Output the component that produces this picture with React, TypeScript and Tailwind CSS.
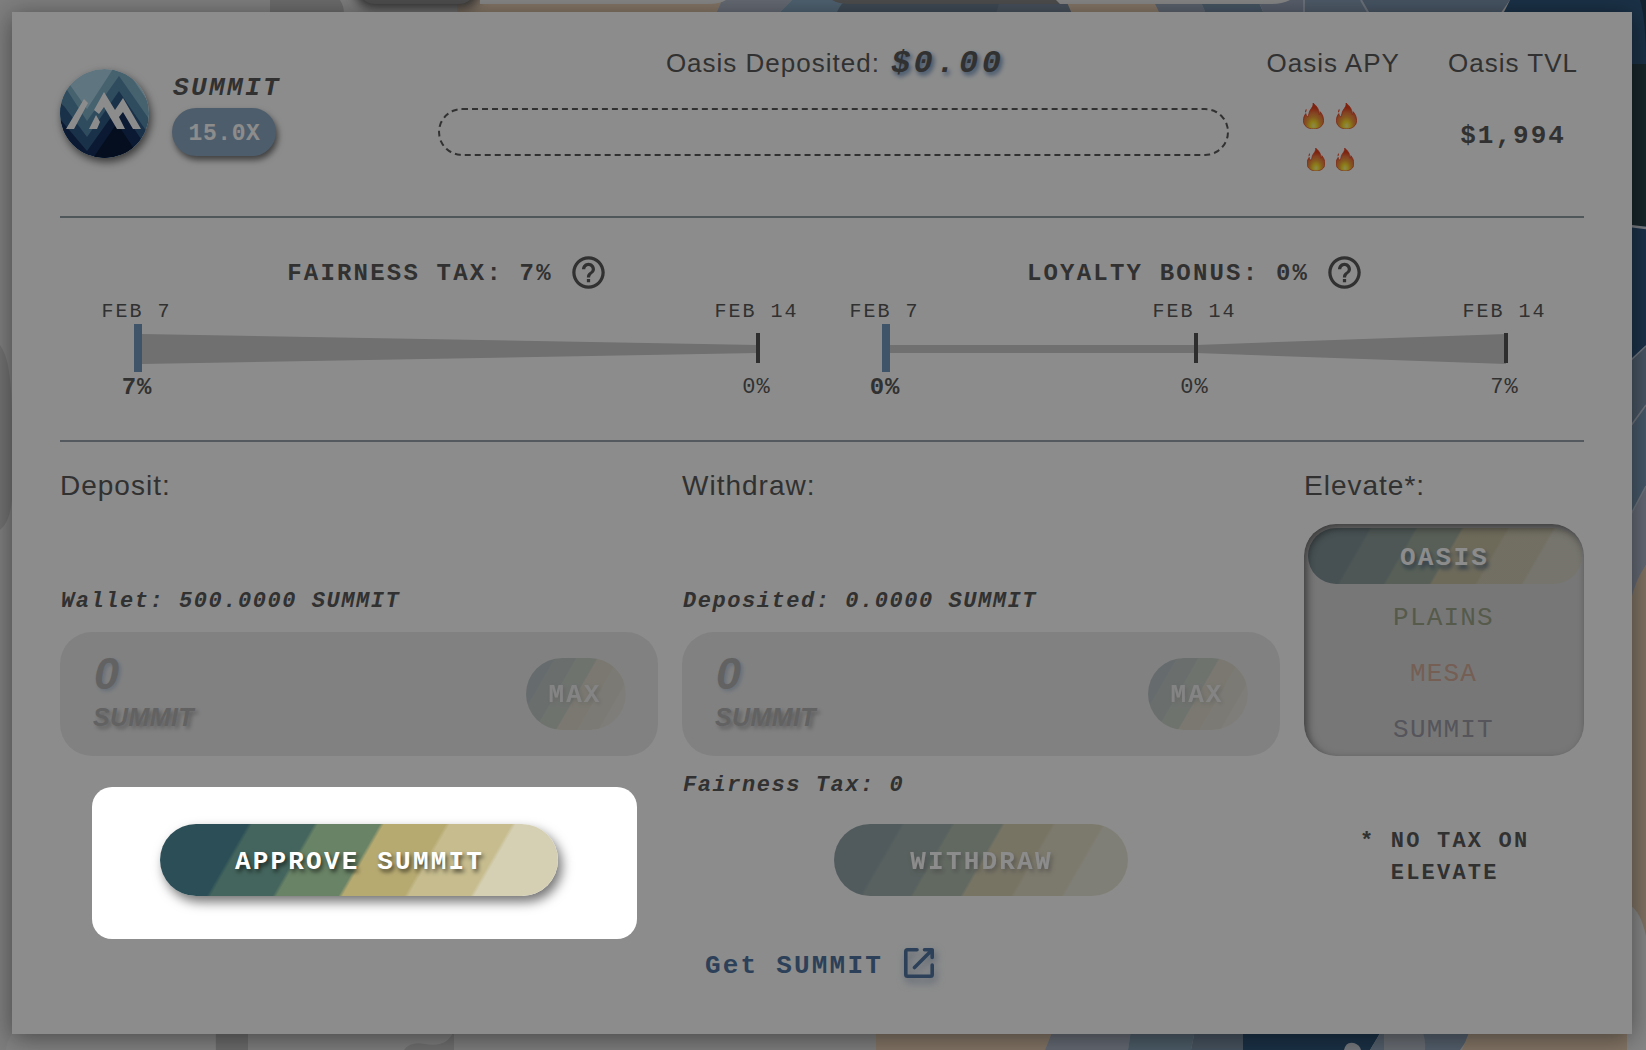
import React from "react";

const mono = "font-['Liberation_Mono',monospace]";
const sans = "font-['Liberation_Sans',sans-serif]";
const oasis =
  "bg-[linear-gradient(120deg,#2b4e57_20%,#44655d_21%,#44655d_35%,#698366_36%,#698366_50%,#b7aa71_51%,#b7aa71_65%,#c6bc8e_66%,#c6bc8e_80%,#d5d0b4_81%)]";

function Backdrop() {
  return (
    <svg className="absolute inset-0" width="1646" height="1050" viewBox="0 0 1646 1050" aria-hidden="true">
      <defs>
        <filter id="soft" x="-20%" y="-50%" width="140%" height="200%">
          <feGaussianBlur stdDeviation="6" />
        </filter>
      </defs>
      <rect width="1646" height="1050" fill="#e6e6e6" />
      <path d="M270 0H340Q344 6 344 14H270Z" fill="#c4c4c4" />
      <path d="M457 0H722L716 14H457Z" fill="#efd5b9" />
      <rect x="355" y="-30" width="125" height="38" rx="18" fill="#555" filter="url(#soft)" />
      <path d="M722 0H792L778 14H716Z" fill="#b7bfd0" />
      <path d="M792 0H850L838 14H778Z" fill="#8fb0cb" />
      <path d="M836 14Q842 0 850 0H1000V14Z" fill="#71879b" />
      <path d="M1000 0H1072V14H996Z" fill="#8091a6" />
      <path d="M1066 0H1153L1160 14H1072Z" fill="#efd5b9" />
      <path d="M1153 0H1200L1206 14H1160Z" fill="#a4b0c4" />
      <path d="M1200 0H1258L1264 14H1206Z" fill="#7f9ab4" />
      <path d="M1258 0H1304V14H1264Z" fill="#a0adc4" />
      <path d="M1304 0H1361L1369 14H1304Z" fill="#8ea4bd" />
      <path d="M1361 0H1510L1500 14H1369Z" fill="#8199b3" />
      <path d="M1361 0L1369 14M1304 0V14" stroke="#c4cfdf" strokeWidth="2" />
      <rect x="358" y="-30" width="118" height="34" rx="17" fill="#8c8c8c" />
      <path d="M480 0H726Q720 4 708 4H480Z" fill="#f4f4f4" />
      <path d="M832 0H1060V4H850Q838 4 832 0Z" fill="#8c8c8c" />
      <path d="M1056 0H1290Q1282 4 1272 4H1060Z" fill="#f4f4f4" />

      <path d="M1510 0H1646V64H1620V20H1500Z" fill="#315a80" />
      <path d="M1640 0Q1646 20 1646 64V0Z" fill="#243f58" />
      <rect x="1620" y="64" width="26" height="163" fill="#2b454b" />
      <rect x="1620" y="226" width="26" height="140" fill="#315a84" />
      <path d="M1630 226L1646 228" stroke="#dde4ee" strokeWidth="2.5" />
      <path d="M1630 360L1646 345V406L1630 428Z" fill="#8299b3" />
      <path d="M1630 428L1646 406V486L1630 517Z" fill="#809fbd" />
      <path d="M1630 517L1646 486V565L1630 603Z" fill="#b3bdd1" />
      <path d="M1630 361L1646 346M1630 427L1646 405M1630 516L1646 486" stroke="#c9d3e2" strokeWidth="1.5" />
      <path d="M1630 603Q1636 578 1646 565V940L1630 906Z" fill="#e8cfb5" />
      <path d="M1630 906Q1640 910 1646 936V1050H1627V1020Z" fill="#f2f2f2" />

      <path d="M0 345Q12 360 12 420V500Q10 522 0 530Z" fill="#cfcfcf" />
      <path d="M6 1050Q8 1030 30 1020H215V1050Z" fill="#ededed" />
      <path d="M216 1030H248V1050H216Z" fill="#c4c4c4" />
      <path d="M404 1050Q410 1041 425 1044Q448 1048 454 1030V1050Z" fill="#cccccc" />
      <path d="M876 1030H1053L1045 1050H876Z" fill="#efd5b9" />
      <path d="M1053 1030H1131L1128 1050H1045Z" fill="#b7bfd0" />
      <path d="M1131 1030H1195L1191 1050H1128Z" fill="#8ba7bd" />
      <path d="M1195 1030H1243V1050H1191Z" fill="#8097ae" />
      <path d="M1243 1030H1382L1370 1050H1243Z" fill="#315a80" />
      <path d="M1382 1030H1474L1460 1050H1370Z" fill="#99aec6" />
      <path d="M1384 1030H1422Q1426 1040 1425 1050H1384Z" fill="#c0c8d4" />
      <path d="M1344 1050Q1346 1041 1354 1043Q1360 1045 1361 1050Z" fill="#d8dde6" />
      <path d="M1470 1030H1627V1050H1462Z" fill="#efd5b9" />
    </svg>
  );
}

function Logo() {
  return (
    <svg
      viewBox="0 0 89 89"
      className="mt-[57px] size-[89px] shrink-0 rounded-full shadow-[2px_4px_8px_rgba(0,0,0,0.6)]"
    >
      <defs>
        <clipPath id="disc">
          <circle cx="44.5" cy="44.5" r="44.5" />
        </clipPath>
      </defs>
      <g clipPath="url(#disc)">
        <rect width="89" height="89" fill="#aed5e7" />
        <path d="M0 28L10 16L27 40L53 0L66 0L89 34V89H0Z" fill="#7fb2c9" />
        <path d="M0 10L27 52L59 7L89 50V89H0Z" fill="#5789ac" />
        <path d="M0 34L4 37L27 68L59 22L89 66V89H0Z" fill="#315b85" />
        <path d="M0 50L27 82L59 37L89 82V89H0Z" fill="#142f5d" />
        <path d="M33 89L57 54L80 89Z" fill="#091b3a" />
        <path
          d="M6 60L24 30L28 34L14 60ZM34 41L44 23L55 41L63 29L81 60H73L63 43L59 48L65 60H57L44 38L39 45ZM36 46L40 53L37 60H29Z"
          fill="#fff"
        />
      </g>
    </svg>
  );
}

function Flame({ className }: { className: string }) {
  return (
    <svg viewBox="0 0 21 27" className={className} aria-hidden="true">
      <defs>
        <radialGradient id="fl" cx="50%" cy="88%" r="82%">
          <stop offset="0" stopColor="#fffb9a" />
          <stop offset="0.2" stopColor="#ffe62e" />
          <stop offset="0.42" stopColor="#f2a23a" />
          <stop offset="0.62" stopColor="#ee7a40" />
          <stop offset="0.85" stopColor="#e8401c" />
        </radialGradient>
      </defs>
      <path
        d="M10 0C15 4 16.500 8 16.500 12C17.300 11 17.600 10 17.400 9C20 12 21 15 21 18.500C21 23.500 16.500 27 10.500 27C4.500 27 0 23.500 0 18.500C0 15 1 13 2.500 11C3 13 3.500 14 4.500 14.500C6 12 5.500 10 7 7.500C9 4.500 10.500 3 10 0Z"
        fill="url(#fl)"
        stroke="#e03414"
        strokeWidth="0.700"
      />
      <path d="M3 6C2 7.500 1.500 9 2 10C3.500 9 3.500 7.500 3 6Z" fill="#e8401c" />
    </svg>
  );
}

function HelpIcon() {
  return (
    <svg viewBox="0 0 24 24" className="size-[39px]" fill="currentColor" aria-hidden="true">
      <path d="M11 18h2v-2h-2v2zm1-16C6.480 2 2 6.480 2 12s4.480 10 10 10 10-4.480 10-10S17.520 2 12 2zm0 18c-4.410 0-8-3.590-8-8s3.590-8 8-8 8 3.590 8 8-3.590 8-8 8zm0-14c-2.210 0-4 1.790-4 4h2c0-1.100.9-2 2-2s2 .9 2 2c0 2-3 1.750-3 5h2c0-2.250 3-2.500 3-5 0-2.210-1.790-4-4-4z" />
    </svg>
  );
}

type Stop = { x: number; date: string; pct: string; active?: boolean };

function Timeline({ title, shape, stops }: { title: string; shape: string; stops: Stop[] }) {
  return (
    <div className="w-[748px] pt-[35px]">
      <div className="flex h-[39px] items-center justify-center gap-[16px] pr-[1px]">
        <span className="pt-[3px] text-[24px] font-bold leading-8 tracking-[2.200px]">{title}</span>
        <HelpIcon />
      </div>
      <div className="relative mt-[4px] h-[108px]">
        <svg width="748" height="48" viewBox="0 0 748 48" className="absolute top-[28px] left-0">
          <path d={shape} fill="#cccccc" />
        </svg>
        {stops.map((s, i) => (
          <div
            key={i}
            className="absolute top-0 flex w-[120px] -translate-x-1/2 flex-col items-center"
            style={{ left: s.x }}
          >
            <span className="-ml-[3px] h-[28px] whitespace-pre text-[20px] leading-[32px] tracking-[2px]">{s.date}</span>
            <span className="flex h-[48px] items-center">
              <span className={s.active ? "h-[48px] w-[8px] bg-[#7399be]" : "h-[30px] w-[4px] bg-[#555]"} />
            </span>
            <span
              className={
                s.active
                  ? "-ml-[2px] text-[24px] font-bold leading-[32px] tracking-[0.800px]"
                  : "-ml-[3px] text-[22px] leading-[32px] tracking-[1px]"
              }
            >
              {s.pct}
            </span>
          </div>
        ))}
      </div>
    </div>
  );
}

function AmountBox() {
  return (
    <div className="mt-[14px] flex h-[124px] items-center justify-between rounded-[32px] bg-[#ececec] pr-[32px] pl-[33px]">
      <div className={`${sans} flex flex-col font-bold italic text-[#b2b2b2]`}>
        <span className="h-[40px] pl-px text-[45px] leading-[38px] [text-shadow:2px_2px_4px_#b9c8d8]">0</span>
        <span className="mt-[6px] text-[25px] leading-[32px] tracking-[0.400px] [text-shadow:3px_3px_4px_#aaa]">SUMMIT</span>
      </div>
      <div className={`flex h-[72px] w-[100px] items-center justify-center rounded-full opacity-25 ${oasis}`}>
        <span className="-ml-[2px] pt-[3px] text-[26px] font-bold tracking-[2px] text-white [text-shadow:2px_2px_4px_rgba(0,0,0,0.6)]">
          MAX
        </span>
      </div>
    </div>
  );
}

const pillText = "pt-[4px] pl-px text-[26px] font-bold tracking-[2.200px] text-white [text-shadow:2px_3px_4px_rgba(0,0,0,0.6)]";
const heading = `${sans} h-[40px] text-[28px] leading-[40px] tracking-[1px]`;
const note = "text-[22px] font-bold italic leading-8 tracking-[1.550px] pl-px";

export default function App() {
  return (
    <div className={`relative h-[1050px] w-[1646px] overflow-hidden p-3 text-[#5a5a5a] ${mono}`}>
      <Backdrop />
      <main className="relative flex h-[1022px] w-[1620px] flex-col bg-white px-12 shadow-[0_4px_24px_rgba(0,0,0,0.45)]">
        <header className="flex h-[204px] items-start">
          <Logo />
          <div className="mt-[60px] ml-[23px] w-[104px]">
            <div className="ml-px text-[26px] font-bold italic leading-8 tracking-[2.400px]">SUMMIT</div>
            <div className="mt-[4px] flex h-[48px] items-center justify-center rounded-full bg-[#8ea9c4] pt-[4px] pl-px text-[23px] font-bold tracking-[0.600px] text-white shadow-[2px_4px_6px_rgba(0,0,0,0.55)]">
              15.0X
            </div>
          </div>
          <div className="mt-[31px] ml-[162px] w-[792px]">
            <div className="flex h-[40px] items-baseline justify-center pl-[3px] leading-[40px]">
              <span className={`${sans} text-[26px] tracking-[1px]`}>Oasis Deposited:</span>
              <span className="ml-[11px] text-[32px] font-bold italic leading-[40px] tracking-[3.500px] [text-shadow:2px_3px_5px_#5f86b4]">
                $0.00
              </span>
            </div>
            <div className="mt-[25px] h-[48px] rounded-full border-2 border-dashed border-[#5a5a5a]" />
          </div>
          <div className="mt-[31px] ml-[14px] flex w-[180px] flex-col items-center">
            <div className={`${sans} h-[40px] text-[26px] leading-[40px] tracking-[1px]`}>Oasis APY</div>
            <div className="mt-[20px] mr-[7px] flex gap-[12px]">
              <Flame className="h-[26px] w-[21px]" />
              <Flame className="h-[26px] w-[21px]" />
            </div>
            <div className="mt-[19px] mr-[6px] flex gap-[11px]">
              <Flame className="h-[23px] w-[18px]" />
              <Flame className="h-[23px] w-[18px]" />
            </div>
          </div>
          <div className="mt-[31px] ml-[19px] flex w-[142px] flex-col items-center">
            <div className={`${sans} h-[40px] text-[26px] leading-[40px] tracking-[1px]`}>Oasis TVL</div>
            <div className="mt-[37px] text-[26px] font-bold leading-8 tracking-[2px]">$1,994</div>
          </div>
        </header>
        <div className="h-[2px] bg-[#929fa7]" />
        <section className="flex h-[222px] justify-center">
          <Timeline
            title="FAIRNESS TAX: 7%"
            shape="M68 10L684 21V29L68 40Z"
            stops={[
              { x: 64, date: "FEB 7", pct: "7%", active: true },
              { x: 684, date: "FEB 14", pct: "0%" },
            ]}
          />
          <Timeline
            title="LOYALTY BONUS: 0%"
            shape="M68 21H374L684 10V40L374 29H68Z"
            stops={[
              { x: 64, date: "FEB 7", pct: "0%", active: true },
              { x: 374, date: "FEB 14", pct: "0%" },
              { x: 684, date: "FEB 14", pct: "7%" },
            ]}
          />
        </section>
        <div className="h-[2px] bg-[#99a0ad]" />
        <section className="flex h-[454px] gap-6 pt-6">
          <div className="w-[598px]">
            <div className={heading}>Deposit:</div>
            <div className={`mt-[80px] ${note}`}>Wallet: 500.0000 SUMMIT</div>
            <AmountBox />
            <div
              className={`mt-[68px] ml-[100px] flex h-[72px] w-[398px] items-center justify-center rounded-full shadow-[4px_6px_12px_rgba(0,0,0,0.55)] ${oasis}`}
            >
              <span className={pillText}>APPROVE SUMMIT</span>
            </div>
          </div>
          <div className="w-[598px]">
            <div className={heading}>Withdraw:</div>
            <div className={`mt-[80px] ${note}`}>Deposited: 0.0000 SUMMIT</div>
            <AmountBox />
            <div className={`mt-[14px] ${note}`}>Fairness Tax: 0</div>
            <div
              className={`mt-[22px] ml-[152px] flex h-[72px] w-[294px] items-center justify-center rounded-full opacity-50 ${oasis}`}
            >
              <span className={pillText}>WITHDRAW</span>
            </div>
          </div>
          <div className="w-[280px]">
            <div className={heading}>Elevate*:</div>
            <div className="relative mt-[18px] flex h-[232px] flex-col overflow-hidden rounded-[32px] bg-[#d9d9d9] pt-1 pr-px text-center text-[26px] leading-[68px] tracking-[1.200px]">
              <div className={`absolute top-1 right-[2px] left-1 h-[56px] rounded-full opacity-50 ${oasis}`} />
              <div className="relative h-[56px] pl-[2px] font-bold leading-[60px] tracking-[2.200px] text-white [text-shadow:2px_4px_4px_#5c7287]">OASIS</div>
              <div className="h-[56px] text-[#9ba588]">PLAINS</div>
              <div className="h-[56px] text-[#d6ab98]">MESA</div>
              <div className="h-[56px] text-[#9b9ba7]">SUMMIT</div>
              <div className="absolute inset-0 rounded-[32px] shadow-[inset_3px_4px_9px_rgba(0,0,0,0.5)]" />
            </div>
            <div className="mt-[70px] ml-[56px] whitespace-pre text-[22px] font-bold leading-8 tracking-[2.200px]">
              {"* NO TAX ON\n  ELEVATE"}
            </div>
          </div>
        </section>
        <footer className="mt-[51px] flex items-center justify-center gap-[21px] pr-[5px] text-[#5276a2]">
          <span className="pt-[3px] text-[26px] font-bold leading-8 tracking-[2.200px]">Get SUMMIT</span>
          <svg
            width="30"
            height="30"
            viewBox="0 0 30 30"
            fill="none"
            stroke="currentColor"
            strokeWidth="3.600"
            strokeLinejoin="round"
            className="-mt-[3px] overflow-visible drop-shadow-[2px_4px_4px_rgba(82,118,162,0.6)]"
          >
            <path d="M13 1.800H3.500Q1.800 1.800 1.800 3.500V26.500Q1.800 28.200 3.500 28.200H26.500Q28.200 28.200 28.200 26.500V17" strokeLinecap="round" />
            <path d="M20.500 1.800H28.200V9.500M28 2L10.500 19.500" strokeLinecap="round" />
          </svg>
        </footer>
      </main>
      <div className="absolute top-[787px] left-[91.5px] h-[152px] w-[545px] rounded-[20px] shadow-[0_0_0_2000px_rgba(0,0,0,0.45)]" />
    </div>
  );
}
